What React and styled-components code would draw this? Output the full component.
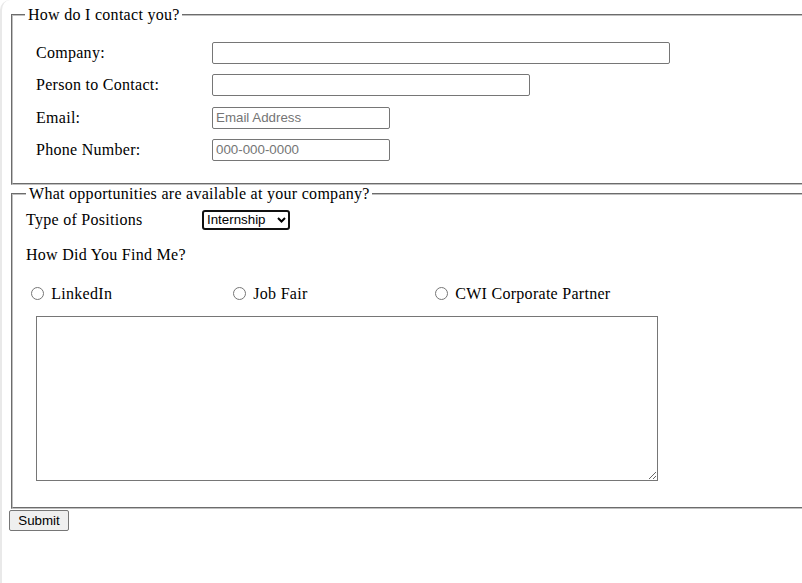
import React from 'react';
import styled, { createGlobalStyle } from 'styled-components';

const GlobalStyle = createGlobalStyle`
  html { overflow-x: hidden; }
  body {
    margin: 0;
    background: #fff;
    font-family: "Liberation Serif", "Times New Roman", serif;
    font-size: 16px;
    color: #000;
  }
`;

const Page = styled.div`
  min-height: 100vh;
  box-sizing: border-box;
  border-left: 2px solid #e9e9e9;
  border-top-left-radius: 10px;
  padding: 6px 0 0 7px;
`;

const Fieldset = styled.fieldset`
  margin: 0 2px;
  min-width: 830px;
  border: 2px groove rgb(192, 192, 192);
  padding: 0 12px ${p => p.$bottom}px ${p => p.$left}px;
`;

const Legend = styled.legend`
  padding: 0 2px 0 3px;
  font-size: 16px;
  letter-spacing: 0.28px;
`;

const ContactGrid = styled.div`
  display: grid;
  grid-template-columns: 176px auto;
  grid-auto-rows: 22px;
  row-gap: 10.33px;
  align-items: center;
  margin: 18px 0 0 11px;
`;

const Label = styled.label`
  font-size: 16px;
  letter-spacing: 0.28px;
`;

const TextInput = styled.input`
  box-sizing: border-box;
  width: ${p => p.$width}px;
  height: 22px;
  padding: 1px 3px;
  border: 1px solid #767676;
  border-radius: 2px;
  font-family: "Liberation Sans", Arial, sans-serif;
  font-size: 13.33px;
  &::placeholder { color: #757575; }
`;

const PositionRow = styled.div`
  display: grid;
  grid-template-columns: 176px auto;
  align-items: center;
  margin-top: 7px;
`;

const SelectWrap = styled.div`
  position: relative;
  width: 88px;
  height: 20px;
`;

const Select = styled.select`
  appearance: none;
  box-sizing: border-box;
  width: 88px;
  height: 20px;
  padding: 0 16px 0 3px;
  border: 2px solid #111;
  border-radius: 3px;
  background: #fff;
  font-family: "Liberation Sans", Arial, sans-serif;
  font-size: 13.33px;
  color: #000;
`;

const Chevron = styled.svg`
  position: absolute;
  right: 4px;
  top: 7px;
  pointer-events: none;
`;

const Question = styled.p`
  margin: 16px 0 0;
  letter-spacing: 0.28px;
`;

const RadioRow = styled.div`
  display: grid;
  grid-template-columns: repeat(3, 202px);
  margin-top: 20px;
`;

const RadioLabel = styled.label`
  white-space: nowrap;
  letter-spacing: 0.28px;
  input {
    margin: 3px 3px 0 5px;
    width: 13px;
    height: 13px;
    vertical-align: -1px;
  }
`;

const Comments = styled.textarea`
  display: block;
  box-sizing: border-box;
  width: 622px;
  height: 165px;
  margin: 13px 0 0 10px;
  padding: 2px;
  border: 1px solid #767676;
  border-radius: 0;
  font-family: "Liberation Mono", monospace;
  font-size: 13.33px;
`;

const SubmitButton = styled.button`
  display: block;
  box-sizing: border-box;
  width: 60px;
  height: 21px;
  margin-top: 1px;
  padding: 1px 6px;
  border: 1px solid #767676;
  border-radius: 2px;
  background: #efefef;
  font-family: "Liberation Sans", Arial, sans-serif;
  font-size: 13.33px;
  color: #000;
`;

const contactFields = [
  { label: 'Company:', width: 458 },
  { label: 'Person to Contact:', width: 318 },
  { label: 'Email:', width: 178, placeholder: 'Email Address' },
  { label: 'Phone Number:', width: 178, placeholder: '000-000-0000' },
];

const sources = ['LinkedIn', 'Job Fair', 'CWI Corporate Partner'];

const App = () => {
  return (
    <Page>
      <GlobalStyle />
      <form onSubmit={e => e.preventDefault()}>
        <Fieldset $bottom={22} $left={12}>
          <Legend>How do I contact you?</Legend>
          <ContactGrid>
            {contactFields.map(f => (
              <React.Fragment key={f.label}>
                <Label>{f.label}</Label>
                <TextInput type="text" $width={f.width} placeholder={f.placeholder} />
              </React.Fragment>
            ))}
          </ContactGrid>
        </Fieldset>
        <Fieldset $bottom={26} $left={13}>
          <Legend>What opportunities are available at your company?</Legend>
          <PositionRow>
            <Label>Type of Positions</Label>
            <SelectWrap>
              <Select defaultValue="internship">
                <option value="internship">Internship</option>
                <option value="fulltime">Full Time</option>
                <option value="parttime">Part Time</option>
              </Select>
              <Chevron width="9" height="6" viewBox="0 0 9 6">
                <path d="M1 1l3.5 3.5L8 1" fill="none" stroke="#000" strokeWidth="2" />
              </Chevron>
            </SelectWrap>
          </PositionRow>
          <Question>How Did You Find Me?</Question>
          <RadioRow>
            {sources.map(s => (
              <RadioLabel key={s}>
                <input type="radio" name="source" value={s} /> {s}
              </RadioLabel>
            ))}
          </RadioRow>
          <Comments />
        </Fieldset>
        <SubmitButton type="submit">Submit</SubmitButton>
      </form>
    </Page>
  );
};

export default App;
